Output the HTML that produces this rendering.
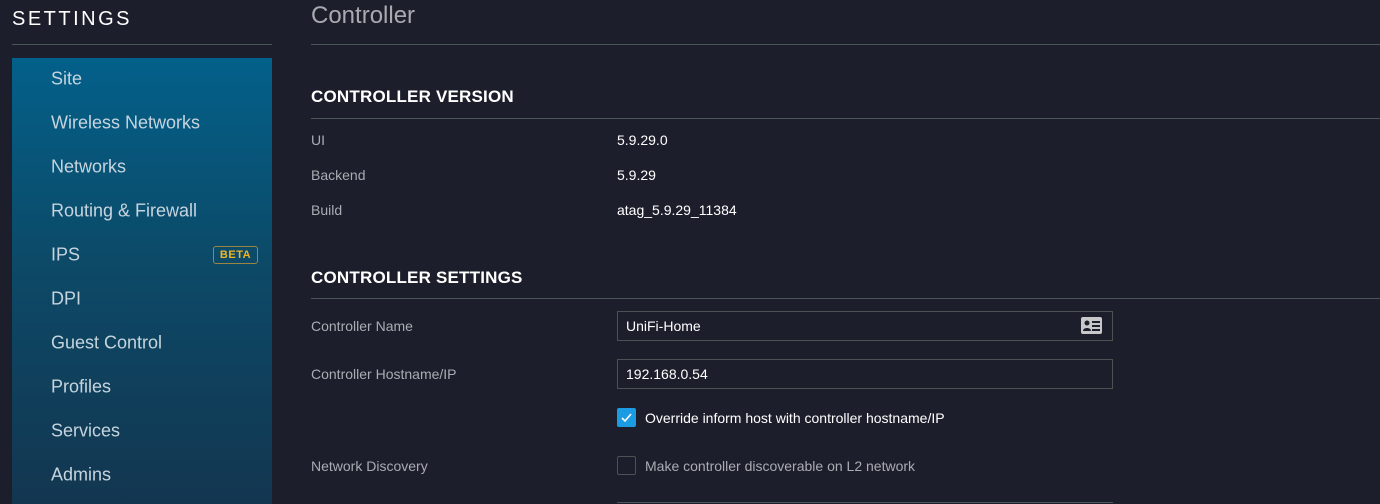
<!DOCTYPE html>
<html><head><style>
body{margin:0;width:1380px;height:504px;background:#1d1e2b;font-family:"Liberation Sans",sans-serif;position:relative;overflow:hidden}
.a{position:absolute;white-space:nowrap}
.side{position:absolute;left:12px;top:58px;width:260px;height:446px;background:linear-gradient(#03608a,#0c4a68 45%,#133650)}
.it{position:absolute;left:39px;font-size:18px;color:#c6d4de;transform:translateY(-50%)}
.line{position:absolute;height:1px;background:#4a5656}
.h{font-size:17px;font-weight:bold;color:#fff;letter-spacing:.2px}
.lb{font-size:14px;color:#a9acb3}
.v{font-size:14px;color:#fff}
.inp{position:absolute;left:617px;width:494px;height:28px;border:1px solid #4a5252;background:#1d1e2b}
</style></head><body>
<div class="a" style="left:12px;top:8px;font-size:20px;color:#fff;letter-spacing:2.5px">SETTINGS</div>
<div class="line" style="left:12px;top:44px;width:260px"></div>
<div class="side">
<div class="it" style="top:21px">Site</div>
<div class="it" style="top:65px">Wireless Networks</div>
<div class="it" style="top:109px">Networks</div>
<div class="it" style="top:153px">Routing &amp; Firewall</div>
<div class="it" style="top:197px">IPS</div>
<div class="a" style="left:201px;top:188px;width:43px;height:16px;border:1px solid #9a8542;border-radius:3px;color:#f0b323;font-size:11px;font-weight:bold;text-align:center;line-height:16px;letter-spacing:.5px">BETA</div>
<div class="it" style="top:241px">DPI</div>
<div class="it" style="top:285px">Guest Control</div>
<div class="it" style="top:329px">Profiles</div>
<div class="it" style="top:373px">Services</div>
<div class="it" style="top:417px">Admins</div>
</div>
<div class="a" style="left:311px;top:2px;font-size:24px;color:#a8aab0;font-weight:300">Controller</div>
<div class="line" style="left:311px;top:44px;width:1069px"></div>
<div class="a h" style="left:311px;top:87px">CONTROLLER VERSION</div>
<div class="line" style="left:311px;top:118px;width:1069px"></div>
<div class="a lb" style="left:311px;top:132px">UI</div><div class="a v" style="left:617px;top:132px">5.9.29.0</div>
<div class="a lb" style="left:311px;top:167px">Backend</div><div class="a v" style="left:617px;top:167px">5.9.29</div>
<div class="a lb" style="left:311px;top:202px">Build</div><div class="a v" style="left:617px;top:202px">atag_5.9.29_11384</div>
<div class="a h" style="left:311px;top:268px">CONTROLLER SETTINGS</div>
<div class="line" style="left:311px;top:298px;width:1069px"></div>
<div class="a lb" style="left:311px;top:318px">Controller Name</div>
<div class="inp" style="top:311px"></div>
<div class="a v" style="left:626px;top:318px">UniFi-Home</div>
<svg class="a" style="left:1081px;top:317px" width="21" height="17" viewBox="0 0 21 17"><rect width="21" height="17" rx="2" fill="#c8c8c8"/><circle cx="6" cy="6" r="2.5" fill="#1d1e2b"/><path d="M2 14c0-4 8-4 8 0z" fill="#1d1e2b"/><rect x="11" y="4" width="8" height="2" fill="#1d1e2b"/><rect x="11" y="8" width="8" height="2" fill="#1d1e2b"/><rect x="11" y="12" width="8" height="2" fill="#1d1e2b"/></svg>
<div class="a lb" style="left:311px;top:366px">Controller Hostname/IP</div>
<div class="inp" style="top:359px"></div>
<div class="a v" style="left:626px;top:366px">192.168.0.54</div>
<div class="a" style="left:617px;top:408px;width:19px;height:19px;background:#1b9be2;border-radius:2px"></div>
<svg class="a" style="left:617px;top:408px" width="19" height="19"><path d="M5 10l3 3 6-7" stroke="#fff" stroke-width="1.6" fill="none"/></svg>
<div class="a v" style="left:645px;top:410px">Override inform host with controller hostname/IP</div>
<div class="a lb" style="left:311px;top:458px">Network Discovery</div>
<div class="a" style="left:617px;top:456px;width:17px;height:17px;border:1px solid #4a5252;border-radius:2px"></div>
<div class="a lb" style="left:645px;top:458px">Make controller discoverable on L2 network</div>
<div class="line" style="left:617px;top:502px;width:496px"></div>
</body></html>
